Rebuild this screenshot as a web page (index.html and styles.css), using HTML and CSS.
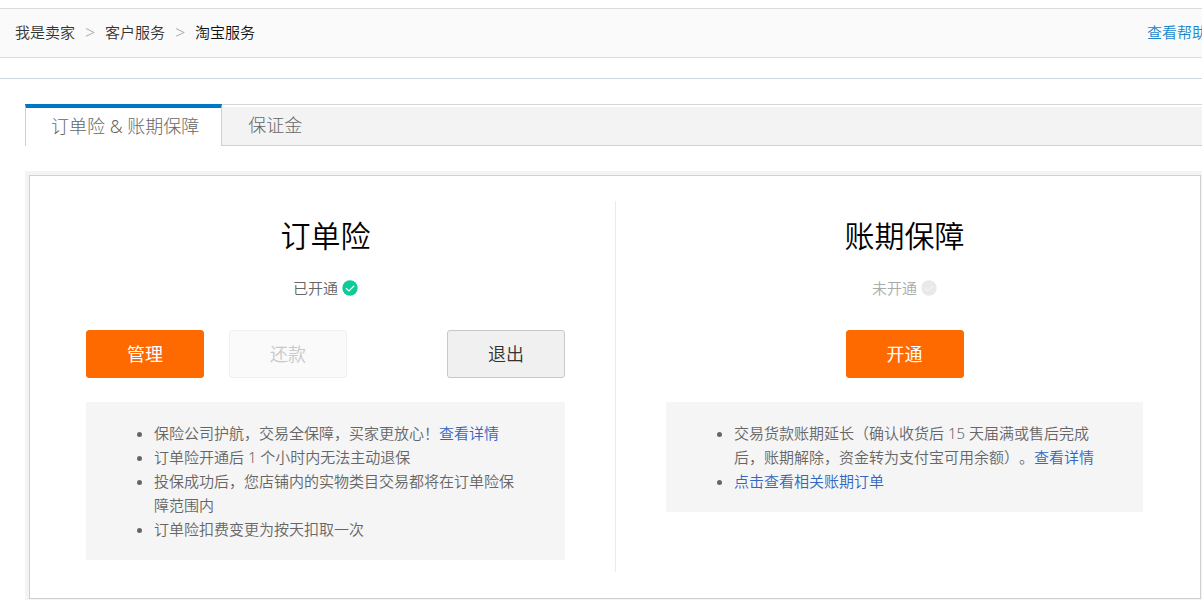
FILE: index.html
```html
<!DOCTYPE html>
<html lang="zh-CN">
<head>
<meta charset="utf-8">
<meta name="viewport" content="width=device-width, initial-scale=1">
<title>淘宝服务</title>
<link rel="stylesheet" href="styles.css">
</head>
<body>
<div class="page">
  <header class="topbar">
    <nav class="crumbs" aria-label="位置">
      <a class="crumb" href="#">我是卖家</a>
      <span class="crumb-sep">&gt;</span>
      <a class="crumb" href="#">客户服务</a>
      <span class="crumb-sep">&gt;</span>
      <span class="crumb crumb-current">淘宝服务</span>
    </nav>
    <a class="help" href="#">查看帮助</a>
  </header>

  <main class="content">
    <nav class="tabs">
      <a class="tab tab-active" href="#">订单险 &amp; 账期保障</a>
      <a class="tab" href="#">保证金</a>
    </nav>

    <div class="frame">
      <div class="card">
        <section class="plan plan-left">
          <h2 class="plan-title">订单险</h2>
          <p class="status">已开通
            <svg class="status-icon" viewBox="0 0 16 16" aria-hidden="true"><circle cx="8" cy="8" r="7.7" fill="#0ccb98"/><path d="M4 8.2 7 10.9 12.2 5.8" fill="none" stroke="#fff" stroke-width="1.2"/></svg>
          </p>
          <div class="actions">
            <button class="btn btn-primary" type="button">管理</button>
            <button class="btn btn-disabled" type="button" disabled>还款</button>
            <button class="btn btn-plain" type="button">退出</button>
          </div>
          <ul class="notes">
            <li>保险公司护航，交易全保障，买家更放心！<a class="link" href="#">查看详情</a></li>
            <li>订单险开通后 1 个小时内无法主动退保</li>
            <li>投保成功后，您店铺内的实物类目交易都将在订单险保障范围内</li>
            <li>订单险扣费变更为按天扣取一次</li>
          </ul>
        </section>

        <section class="plan plan-right">
          <h2 class="plan-title">账期保障</h2>
          <p class="status status-off">未开通
            <svg class="status-icon" viewBox="0 0 16 16" aria-hidden="true"><circle cx="8" cy="8" r="7.7" fill="#e9e9e9"/><path d="M4 8.2 7 10.9 12.2 5.8" fill="none" stroke="#f3f3f3" stroke-width="1.2"/></svg>
          </p>
          <div class="actions actions-center">
            <button class="btn btn-primary" type="button">开通</button>
          </div>
          <ul class="notes">
            <li>交易货款账期延长（确认收货后 15 天届满或售后完成后，账期解除，资金转为支付宝可用余额）。<a class="link" href="#">查看详情</a></li>
            <li><a class="link" href="#">点击查看相关账期订单</a></li>
          </ul>
        </section>
      </div>
    </div>
  </main>
</div>
</body>
</html>
```

FILE: styles.css
```css
* {
  box-sizing: border-box;
}

body {
  margin: 0;
  overflow-x: hidden;
  background: #fff;
  color: #666;
  font: 350 15px/24px "Noto Sans", "Noto Sans CJK SC", sans-serif;
  text-spacing-trim: space-all;
}

a {
  color: inherit;
  text-decoration: none;
}

.page {
  margin-right: -5px;
  padding-top: 8px;
}

.topbar {
  display: flex;
  align-items: center;
  justify-content: space-between;
  height: 50px;
  padding: 0 0 2px 15px;
  border-top: 1px solid #dcdcdc;
  border-bottom: 1px solid #dcdcdc;
  background: #fafafa;
}

.crumbs {
  display: flex;
}

.crumb {
  color: #333;
}

.crumb-current {
  color: #111;
}

.crumb-sep {
  width: 30px;
  color: #aaa;
  font-size: 18px;
  text-align: center;
}

.help {
  color: #1686cc;
}

.content {
  margin-top: 20px;
  padding: 25px 0 0 25px;
  border-top: 1px solid #c9d9dd;
}

.tabs {
  display: flex;
  height: 42px;
  border-top: 1px solid #d6d6d6;
  border-bottom: 1px solid #d0d0d0;
  background: linear-gradient(#fff 2px, #f3f3f3 2px);
}

.tab {
  padding: 0 26px;
  color: #666;
  font-size: 18px;
  font-weight: 300;
  line-height: 40px;
}

.tab-active {
  margin: -1px 0;
  padding: 0 22px 0 25px;
  border: 1px solid #d0d0d0;
  border-top: 4px solid #0077c2;
  border-bottom: 0;
  background: #fff;
  line-height: 36px;
}

.frame {
  margin: 25px 2px 0 0;
  border: 4px solid #f4f4f4;
  border-bottom-width: 1px;
}

.card {
  display: grid;
  grid-template-columns: 1fr 1fr;
  padding: 25px 0 26px;
  border: 1px solid #d0d0d0;
}

.plan {
  padding-top: 15px;
  padding-bottom: 12px;
}

.plan-left {
  padding-left: 56px;
  padding-right: 50px;
}

.plan-right {
  padding-left: 50px;
  padding-right: 57px;
  border-left: 1px solid #ebebeb;
}

.plan-title {
  margin: 0;
  color: #000;
  font-size: 30px;
  font-weight: 350;
  line-height: 40px;
  text-align: center;
}

.status {
  display: flex;
  align-items: center;
  justify-content: center;
  gap: 4px;
  margin: 20px 0 30px;
}

.status-off {
  color: #aaa;
}

.status-icon {
  width: 16px;
  height: 16px;
}

.actions {
  display: flex;
  gap: 25px;
}

.actions-center {
  justify-content: center;
}

.btn {
  width: 118px;
  height: 48px;
  padding: 0;
  border: 1px solid #ff6a00;
  border-radius: 3px;
  font: inherit;
  font-size: 18px;
}

.btn-primary {
  background: #ff6a00;
  color: #fff;
  font-weight: 400;
}

.btn-disabled {
  border-color: #f0f0f0;
  background: #fafafa;
  color: #c8c8c8;
}

.btn-plain {
  margin-left: auto;
  border-color: #c8c8c8;
  background: #f0f0f0;
  color: #333;
}

.notes {
  margin: 24px 0 0;
  padding: 19px 46px 19px 68px;
  background: #f5f5f5;
}

.link {
  color: #3366c0;
}
```
